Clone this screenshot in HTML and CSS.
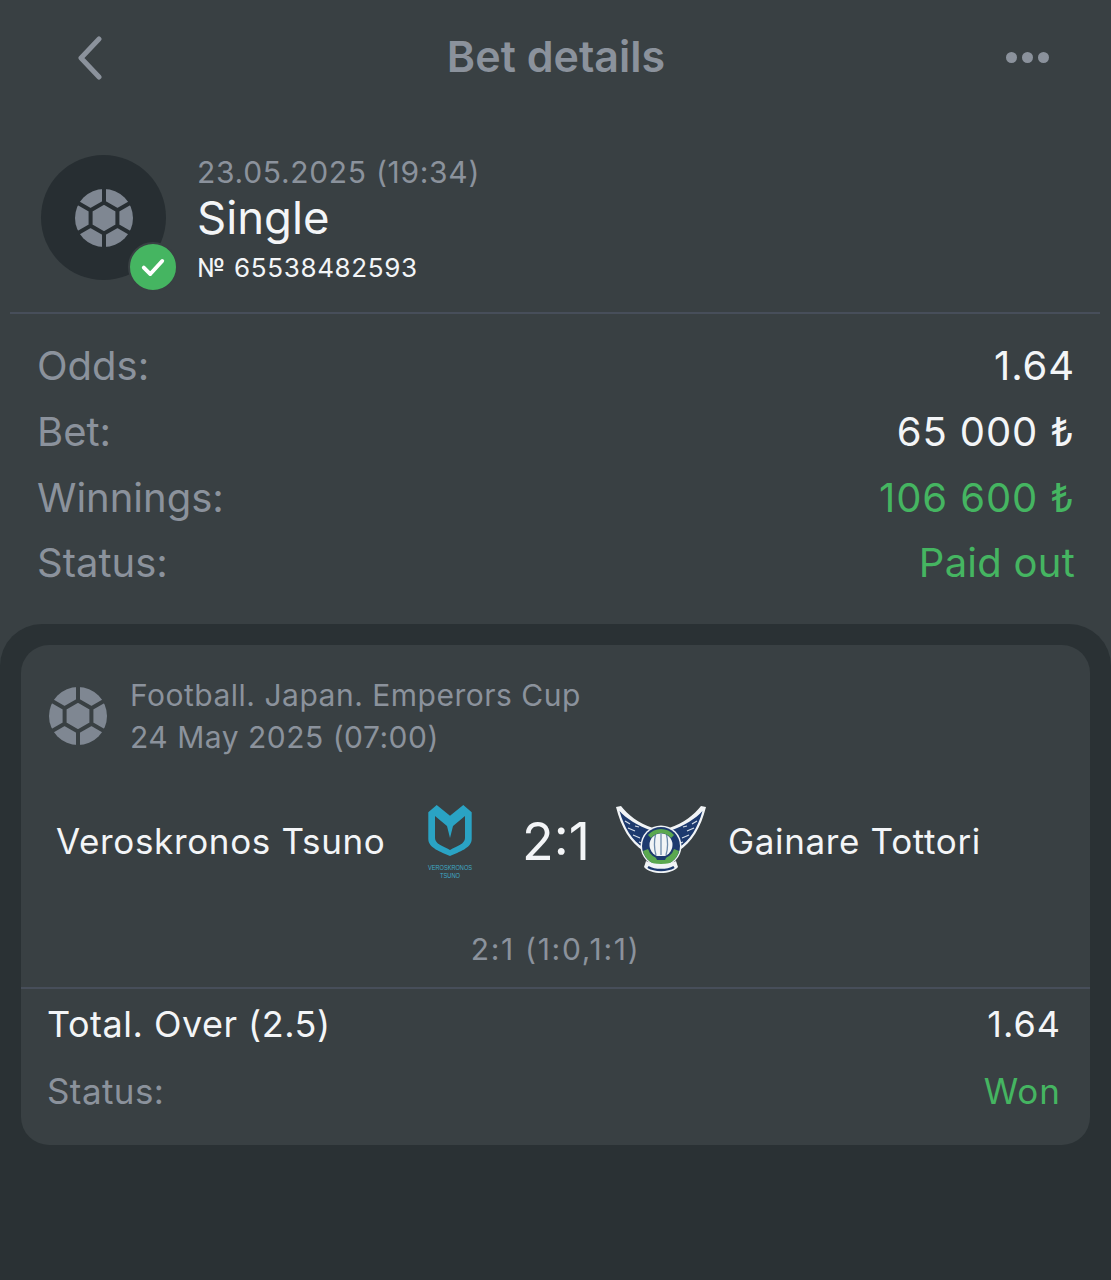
FILE: index.html
```html
<!DOCTYPE html>
<html lang="en">
<head>
  <meta charset="UTF-8">
  <title>Bet details</title>
  <link rel="stylesheet" href="styles.css">
</head>
<body>

<svg class="defs" width="0" height="0">
  <symbol id="ball" viewBox="0 0 58 58">
    <circle cx="29" cy="29" r="29" fill="#7f8792"/>
    <path d="M29 13.5 L42.4 21.25 V36.75 L29 44.5 L15.6 36.75 V21.25 Z M29 13.5 V0 M42.4 21.25 L55 14 M42.4 36.75 L55 44 M29 44.5 V58 M15.6 36.75 L3 44 M15.6 21.25 L3 14" fill="none" stroke="currentColor" stroke-width="4"/>
  </symbol>
  <symbol id="wing" viewBox="0 0 92 72">
    <path d="M1 2 L6 1 C13 10 23 18 38 23 L40 50 L29 46 C15 38 6 22 1 2 Z" fill="#f1f4f6"/>
    <path d="M4.5 6 C11 13 22 21 38 26 L38 47 L29 43 C17 36 9 22 4.5 6 Z" fill="#1d3a6e"/>
    <path d="M10 16 L15 19 M13 23 L20 26 M18 30 L25 33 M24 37 L29 39 M20 21 L24 22" stroke="#d5dde6" stroke-width="1.2"/>
  </symbol>
</svg>

<header class="topbar">
  <svg class="back" viewBox="0 0 26 44" width="26" height="44">
    <path d="M22 3 L4 22 L22 41" fill="none" stroke="#8b929c" stroke-width="5" stroke-linecap="round" stroke-linejoin="round"/>
  </svg>
  <h1>Bet details</h1>
  <div class="dots"><i></i><i></i><i></i></div>
</header>

<section class="head">
  <div class="avatar">
    <svg class="ball" width="58" height="58"><use href="#ball"/></svg>
    <span class="badge">
      <svg viewBox="0 0 24 24" width="26" height="26">
        <path d="M3.5 12.5 L9.5 18.5 L20.5 6.5" fill="none" stroke="#fff" stroke-width="3.6" stroke-linecap="round" stroke-linejoin="round"/>
      </svg>
    </span>
  </div>
  <div class="head-text">
    <div class="date">23.05.2025 (19:34)</div>
    <div class="type">Single</div>
    <div class="number">№ 65538482593</div>
  </div>
</section>

<div class="rule"></div>

<section class="summary">
  <div class="row"><span>Odds:</span><b>1.64</b></div>
  <div class="row"><span>Bet:</span><b>65 000 ₺</b></div>
  <div class="row"><span>Winnings:</span><b class="green">106 600 ₺</b></div>
  <div class="row"><span>Status:</span><b class="green paid">Paid out</b></div>
</section>

<main class="panel">
  <div class="card">
    <div class="league">
      <svg class="ball" width="58" height="58"><use href="#ball"/></svg>
      <div>
        <div>Football. Japan. Emperors Cup</div>
        <div>24 May 2025 (07:00)</div>
      </div>
    </div>

    <div class="match">
      <div class="team team-left">Veroskronos Tsuno</div>
      <svg class="logo" viewBox="0 0 50 78" width="50" height="78">
        <path d="M3.3 10.3 L11.7 3 L25 13.7 L38.3 3 L46.7 10.3 V37 C46.7 46 34 50 25 54 C16 50 3.3 46 3.3 37 Z" fill="#2aa3c4"/>
        <path d="M10 14 L22 24 L25 36 L28 24 L40 14 V36 C40 42 32 44 25 48 C18 44 10 42 10 36 Z" fill="#394043"/>
        <text transform="translate(25 68) scale(1 1.4)" textLength="44" lengthAdjust="spacingAndGlyphs" class="logo-text">VEROSKRONOS</text>
        <text transform="translate(25 76) scale(1 1.4)" textLength="20" lengthAdjust="spacingAndGlyphs" class="logo-text">TSUNO</text>
      </svg>
      <div class="score">2:1</div>
      <svg class="logo logo-right" viewBox="0 0 92 72" width="92" height="72">
        <use href="#wing" width="92" height="72"/>
        <use href="#wing" width="92" height="72" transform="matrix(-1 0 0 1 92 0)"/>
        <circle cx="46" cy="41" r="20.5" fill="#f1f4f6"/>
        <circle cx="46" cy="41" r="19" fill="#1d3a6e"/>
        <path d="M28 46 A18.5 18.5 0 0 0 64 46 L59 44 A13.5 13.5 0 0 1 33 44 Z" fill="#5aa84f"/>
        <path d="M33 30 A17 17 0 0 1 59 30 L56 33 A13 13 0 0 0 36 33 Z" fill="#5aa84f"/>
        <circle cx="46" cy="40" r="11.5" fill="#f1f4f6"/>
        <path d="M40.5 30 C39 35 39 44 41 50 M46 29 V50 M51.5 30 C53 35 53 44 51 50" fill="none" stroke="#6d8bab" stroke-width="1.3"/>
        <path d="M40 51 H52 L50 55 H42 Z" fill="#1d3a6e"/>
        <path d="M31 56 C38 60 54 60 61 56 L63 62 C56 70 36 70 29 62 Z" fill="#f1f4f6"/>
        <path d="M33 62 C40 66 52 66 59 62" fill="none" stroke="#1d3a6e" stroke-width="2.4"/>
      </svg>
      <div class="team team-right">Gainare Tottori</div>
    </div>

    <div class="periods">2:1 (1:0,1:1)</div>

    <div class="rule rule-card"></div>

    <div class="pick">
      <div class="pick-row"><b>Total. Over (2.5)</b><b class="pick-value">1.64</b></div>
      <div class="pick-row pick-status"><span>Status:</span><b class="green pick-value">Won</b></div>
    </div>
  </div>
</main>

</body>
</html>
```

FILE: styles.css
```css
* {
  box-sizing: border-box;
}
body {
  margin: 0;
  min-height: 1280px;
  display: flex;
  flex-direction: column;
  background: #394043;
  color: #f3f5f7;
  font-family: Inter, "Liberation Sans", sans-serif;
}
.defs {
  position: absolute;
}
b {
  font-weight: 400;
}
.green {
  color: #45b561;
}

/* top bar */
.topbar {
  height: 115px;
  display: flex;
  align-items: center;
  justify-content: space-between;
  padding: 0 62px 0 77px;
}
.topbar h1 {
  margin: 0 0 3px 3px;
  font-size: 43px;
  font-weight: 600;
  color: #8b929c;
}
.dots {
  display: flex;
  gap: 5px;
}
.dots i {
  width: 11px;
  height: 11px;
  border-radius: 50%;
  background: #8b929c;
}

/* bet head */
.head {
  height: 197px;
  padding: 40px 0 0 41px;
  display: flex;
  gap: 31px;
}
.avatar {
  position: relative;
  width: 125px;
  height: 125px;
  border-radius: 50%;
  background: #272e32;
  color: #272e32;
  display: flex;
  align-items: center;
  justify-content: center;
}
.badge {
  position: absolute;
  right: -12px;
  bottom: -12px;
  width: 50px;
  height: 50px;
  border: 2px solid #394043;
  border-radius: 50%;
  background: #45b561;
  display: flex;
  align-items: center;
  justify-content: center;
}
.head-text {
  display: flex;
  flex-direction: column;
}
.date {
  font-size: 30px;
  line-height: 34px;
  letter-spacing: 0.7px;
  color: #8b929c;
}
.type {
  font-size: 45.5px;
  line-height: 58px;
}
.number {
  font-size: 26px;
  line-height: 42px;
  letter-spacing: 0.65px;
}
.rule {
  height: 2px;
  margin: 0 11px 0 10px;
  background: #474e5a;
}

/* summary rows */
.summary {
  height: 310px;
  padding: 18.6px 36px 0 37px;
}
.row {
  height: 65.8px;
  display: flex;
  align-items: center;
  justify-content: space-between;
  font-size: 40px;
}
.row span {
  color: #8b929c;
}
.row b {
  letter-spacing: 0.9px;
}
.row .paid {
  letter-spacing: 0.25px;
}

/* dark panel */
.panel {
  flex: 1;
  padding: 21px 21px 0;
  border-radius: 42px 42px 0 0;
  background: #2a3134;
}
.card {
  height: 500px;
  border-radius: 28px;
  background: #394043;
}
.league {
  height: 125px;
  padding: 29px 0 0 28px;
  display: flex;
  gap: 23px;
  font-size: 30px;
  line-height: 42px;
  letter-spacing: 0.5px;
  color: #8b929c;
}
.league .ball {
  color: #394043;
  margin-top: 13px;
}
.match {
  height: 100px;
  margin-top: 21px;
  display: flex;
  align-items: center;
  color: #f3f5f7;
}
.team {
  font-size: 35px;
  letter-spacing: 0.65px;
}
.team-left {
  width: 404px;
  padding-left: 35px;
}
.team-right {
  padding-left: 21px;
}
.score {
  width: 122px;
  margin-left: 20px;
  text-align: center;
  font-size: 52px;
}
.logo-right {
  margin-left: -2px;
}
.logo-text {
  font-size: 5.6px;
  text-anchor: middle;
  fill: #3fa9c6;
  font-family: "Liberation Sans", sans-serif;
}
.periods {
  margin-top: 38px;
  text-align: center;
  font-size: 30px;
  line-height: 40px;
  letter-spacing: 1.7px;
  color: #8b929c;
}
.rule-card {
  margin: 18px 0 0;
}
.pick {
  padding: 1px 29px 0 26px;
  font-size: 36px;
  letter-spacing: 0.5px;
}
.pick-row {
  height: 67px;
  display: flex;
  align-items: center;
  justify-content: space-between;
}
.pick-status {
  font-size: 35px;
  letter-spacing: 0.4px;
}
.pick-value {
  letter-spacing: 1px;
}
.pick-row span {
  color: #8b929c;
}
```
